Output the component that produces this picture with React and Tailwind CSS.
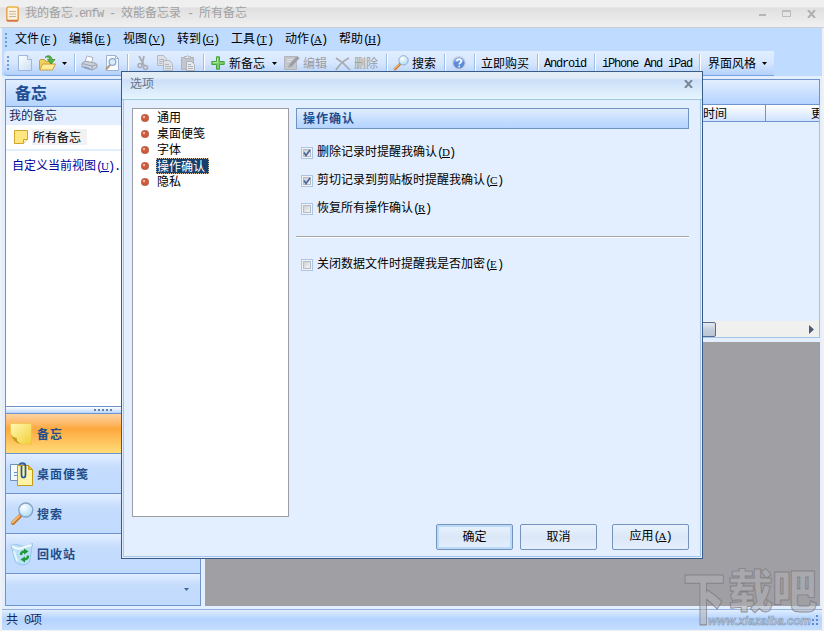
import { useState } from "react";

const menus = [
  { nome: "文件", tecla: "F" },
  { nome: "编辑", tecla: "E" },
  { nome: "视图", tecla: "V" },
  { nome: "转到", tecla: "G" },
  { nome: "工具", tecla: "T" },
  { nome: "动作", tecla: "A" },
  { nome: "帮助", tecla: "H" },
];

const categories = ["通用", "桌面便笺", "字体", "操作确认", "隐私"];

const Mono = ({ children }) => (
  <span className="font-['Liberation_Mono',monospace] text-[12px] tracking-[-1.2px] whitespace-pre">{children}</span>
);

const Hotkey = ({ k }) => (
  <Mono>
    (<span className="font-['Liberation_Serif',serif] text-[11px] tracking-normal underline underline-offset-1 inline-block w-[6px] -indent-px">{k}</span>)
  </Mono>
);

const Sep = ({ className }) => (
  <div className={`h-[18px] w-[2px] shrink-0 border-l border-[#9abfe8] bg-white ${className}`} />
);

const Arrow = ({ className }) => (
  <svg viewBox="0 0 5 3" className={`h-[3px] w-[5px] shrink-0 ${className}`}>
    <path d="M0 0h5L2.5 3z" fill="currentColor" />
  </svg>
);

const Grip = () => (
  <div className="flex w-[2px] shrink-0 flex-col gap-[2px]">
    {[0, 1, 2, 3].map((i) => (
      <span key={i} className="h-[2px] w-[2px] bg-[#6f9bd4]" />
    ))}
  </div>
);

function NewIcon() {
  return (
    <svg viewBox="0 0 16 16" className="h-4 w-4 shrink-0">
      <defs>
        <linearGradient id="page" x1="0" y1="0" x2="1" y2="1">
          <stop offset="0" stopColor="#fff" />
          <stop offset="1" stopColor="#c9def6" />
        </linearGradient>
      </defs>
      <path d="M1.5 .5h9l4 4v11h-13z" fill="url(#page)" stroke="#9db8dc" />
      <path d="M10.5 .5v4h4" fill="#e4f0fd" stroke="#9db8dc" />
    </svg>
  );
}

function OpenIcon() {
  return (
    <svg viewBox="0 0 17 16" className="h-4 w-[17px] shrink-0">
      <path d="M.5 14.500v-9l1-1h4l1.500 2h6v8z" fill="#f3cf5c" stroke="#c9a136" />
      <path d="M.8 15 3.500 9h13l-3 6z" fill="#ffeb9a" stroke="#c9a136" />
      <path d="M6 2.500C9-1 13 1 13 4.500h3L12 9 8.500 4.500H11C10.500 2 8 1.500 6 2.500z" fill="#57b443" stroke="#2f8a2c" strokeWidth=".7" />
    </svg>
  );
}

function PrintIcon() {
  return (
    <svg viewBox="0 0 17 16" className="h-4 w-[17px] shrink-0">
      <path d="M4 7 6 1l6 1.500L10.500 8z" fill="#fff" stroke="#a9b5c4" />
      <path d="M1 8.500 4 6l10 2 2 1.500v3L11 15 1 12z" fill="#ccd2da" stroke="#98a3b2" />
      <path d="m1 8.500 10 2.500 5-1.500M11 11v4" fill="none" stroke="#98a3b2" />
      <path d="m3 12 6 2" stroke="#7ba0d2" strokeWidth="1.500" />
    </svg>
  );
}

function PreviewIcon() {
  return (
    <svg viewBox="0 0 16 16" className="h-4 w-4 shrink-0">
      <path d="M2.500 .5h9l3 3v12h-12z" fill="#f7fbff" stroke="#9cb3d3" />
      <path d="M11.500 .5v3h3" fill="none" stroke="#9cb3d3" />
      <circle cx="8.500" cy="7" r="3.300" fill="#d8ebfb" stroke="#8eabd2" strokeWidth="1.300" />
      <path d="m6 10-4 4.500" stroke="#b99a7c" strokeWidth="2" />
    </svg>
  );
}

function CutIcon() {
  return (
    <svg viewBox="0 0 14 16" className="h-4 w-[14px] shrink-0" fill="none" stroke="#a9abb1">
      <path d="m3 1 5 9M8 1 6 10" strokeWidth="1.700" />
      <circle cx="4" cy="10.500" r="2" strokeWidth="1.500" />
      <circle cx="9.500" cy="12.500" r="2" strokeWidth="1.500" />
    </svg>
  );
}

function CopyIcon() {
  return (
    <svg viewBox="0 0 16 16" className="h-4 w-4 shrink-0" fill="#dde1e6" stroke="#b4b8c0">
      <path d="M.5 .5h6l3 3v7h-9z" />
      <path d="M2 4.500h5M2 6.500h5M2 8.500h3" />
      <path d="M6.500 5.500h6l3 3v7h-9z" />
      <path d="M8 9.500h4M8 11.500h6M8 13.500h6" />
    </svg>
  );
}

function PasteIcon() {
  return (
    <svg viewBox="0 0 16 16" className="h-4 w-4 shrink-0" fill="#c3c6cc" stroke="#b0b3ba">
      <path d="M1.500 2.500h12v12h-12z" />
      <path d="M4.500 3.500v-2h2l1-1 1 1h2v2z" fill="#dde0e4" />
      <path d="M6.500 6.500h5l3 3v6h-8z" fill="#e8eaed" />
      <path d="M8 9.500h3M8 11.500h5M8 13.500h5" />
    </svg>
  );
}

function PlusIcon() {
  return (
    <svg viewBox="0 0 14 14" className="h-[14px] w-[14px] shrink-0">
      <path d="M5.500 .8h3V5.500h4.700v3H8.500v4.700h-3V8.500H.8v-3h4.700z" fill="#7acb66" stroke="#44a23c" strokeLinejoin="round" />
      <path d="M6.500 2v4.500H2" fill="none" stroke="#b4e8a4" />
    </svg>
  );
}

function EditIcon() {
  return (
    <svg viewBox="0 0 16 16" className="h-4 w-4 shrink-0">
      <path d="M.5 1.500h12v13H.5z" fill="#c3c6cb" stroke="#b3b6bc" />
      <path d="M3 4.500h6M3 6.500h4" stroke="#dfe1e4" />
      <path d="m4 13 1.500-4L13 1l2.500 2L8 11.500z" fill="#9a9da3" stroke="#b9bbc0" strokeWidth=".7" />
    </svg>
  );
}

function Magnifier({ className }) {
  return (
    <svg viewBox="0 0 24 24" className={`shrink-0 ${className}`}>
      <defs>
        <radialGradient id="lens" cx=".35" cy=".3" r=".8">
          <stop offset="0" stopColor="#fff" />
          <stop offset="1" stopColor="#a5d8f5" />
        </radialGradient>
      </defs>
      <path d="m10 14-7 7" stroke="#c37a35" strokeWidth="4" strokeLinecap="round" />
      <path d="m9 14-6.500 6.500" stroke="#f7b86c" strokeWidth="1.900" strokeLinecap="round" />
      <circle cx="15.800" cy="8" r="7" fill="url(#lens)" stroke="#86a3c8" strokeWidth="1.300" />
    </svg>
  );
}

function HelpIcon() {
  return (
    <svg viewBox="0 0 14 14" className="h-[14px] w-[14px] shrink-0">
      <circle cx="7" cy="7" r="6.300" fill="#5c8cd6" stroke="#c9d3e2" strokeWidth="1.400" />
      <path d="M2 5.500a5.200 5.200 0 0 1 10 0z" fill="#8db3e8" />
      <path d="M4.800 5.300c0-2.900 4.600-2.600 4.600 0C9.400 6.900 7.200 6.800 7.200 8.500" fill="none" stroke="#fff" strokeWidth="1.600" />
      <path d="M6.400 9.700H8v1.500H6.400z" fill="#fff" />
    </svg>
  );
}

function NoteIcon({ className }) {
  return (
    <svg viewBox="0 0 22 22" className={`shrink-0 ${className}`}>
      <defs>
        <linearGradient id="note" x1="0" y1="0" x2="1" y2="1">
          <stop offset="0" stopColor="#fff8b0" />
          <stop offset="1" stopColor="#f3cf3c" />
        </linearGradient>
      </defs>
      <path d="M.5 .5h21v20.500H11Q3 19 .5 11z" fill="url(#note)" stroke="#e6c341" strokeWidth=".6" />
      <path d="M.5 10Q2 14.500 7 15q-1.500 3 4 6Q3 20 .5 10z" fill="#c79b1b" />
    </svg>
  );
}

function MemoIcon() {
  return (
    <svg viewBox="0 0 24 24" className="h-6 w-6 shrink-0">
      <path d="M.5 2.500h15v16H.5z" fill="#f6faff" stroke="#6f90bd" />
      <path d="M4 10.500h4M4 13.500h4" stroke="#5f95d8" />
      <path d="M7.500 3.500h11l4 4v16h-15z" fill="#fff3a5" stroke="#c59a14" />
      <path d="M18.500 3.500v4h4z" fill="#eac33a" stroke="#c59a14" />
      <path d="M9.500 2.500Q10 1 12.500 1T15.500 3.500V13q0 2.500-2 2.500t-2-2.500V4" fill="none" stroke="#24599e" strokeWidth="1.700" />
    </svg>
  );
}

function RecycleIcon() {
  return (
    <svg viewBox="0 0 24 24" className="h-6 w-6 shrink-0">
      <path d="M1 3.500Q6 1 10 3.500T22.500 1.500L19.500 20q-7 6-14 0z" fill="#b9e0f6" stroke="#82bbe4" strokeWidth=".7" />
      <path d="M2 4q5 4 10 2t9.500-3" fill="none" stroke="#f3fbff" strokeWidth="2" />
      <path d="M4 9q2 9 4 10" stroke="#e6f6ff" strokeWidth="2" fill="none" />
      <path d="M11 13q0-3.500 4-3.500" fill="none" stroke="#21983a" strokeWidth="2.300" />
      <path d="m14 6.500 4.500 3-4.500 3z" fill="#21983a" />
      <path d="M18 13.500q0 4-4 4" fill="none" stroke="#21983a" strokeWidth="2.300" />
      <path d="m15 14.500-4.500 3 4.500 3z" fill="#21983a" />
    </svg>
  );
}

function TitleBar() {
  return (
    <header className="flex h-7 shrink-0 items-center border-b border-[#cbcdd0] bg-linear-to-b from-[#efefef] from-25% via-[#e0e0e0] via-30% to-[#f0f0f0] pl-[6px] text-[#a0a0a0]">
      <svg viewBox="0 0 13 16" className="mt-px h-4 w-[13px]">
        <rect x=".8" y="1" width="11.400" height="14.200" rx="2" fill="#fff3dc" stroke="#e3a15c" strokeWidth="1.500" />
        <path d="M2 1h9" stroke="#efc36a" strokeWidth="2" />
        <path d="M3 5.500h7M3 8h7M3 10.500h7" stroke="#c4b7a8" />
        <path d="M1 14.500h11" stroke="#d7714a" strokeWidth="1.500" />
      </svg>
      <h1 className="mt-[-2px] ml-[6px]">
        我的备忘<Mono>.enfw - </Mono>效能备忘录<Mono> - </Mono>所有备忘
      </h1>
      <div className="mr-[8px] ml-auto flex items-center gap-[16px] text-[#b0b0b0]">
        <span className="mt-[2px] h-[2px] w-[7px] bg-[#b5b5b5]" />
        <span className="h-[7px] w-[9px] border border-t-2 border-[#bdbdbd]" />
        <svg viewBox="0 0 9 8" className="h-2 w-[9px]">
          <path d="m1 0 7 8M8 0 1 8" stroke="currentColor" strokeWidth="2" />
        </svg>
      </div>
    </header>
  );
}

function Toolbar() {
  return (
    <div className="flex h-[25px] w-[770px] shrink-0 items-center rounded-l-sm border-b border-[#79a5df] bg-linear-to-b from-[#e1eeff] via-[#d6e6fe] to-[#b4d1fc] pl-[3px] whitespace-nowrap">
      <Grip />
      <div className="ml-[8px] flex"><NewIcon /></div>
      <div className="ml-[6px] flex"><OpenIcon /></div>
      <Arrow className="ml-[6px]" />
      <Sep className="ml-[7px]" />
      <div className="ml-[5px] flex"><PrintIcon /></div>
      <div className="ml-[6px] flex"><PreviewIcon /></div>
      <Sep className="ml-[7px]" />
      <div className="ml-[7px] flex"><CutIcon /></div>
      <div className="ml-[7px] flex"><CopyIcon /></div>
      <div className="ml-[7px] flex"><PasteIcon /></div>
      <Sep className="ml-[7px]" />
      <div className="ml-[6px] flex"><PlusIcon /></div>
      <span className="ml-[4px] w-9">新备忘</span>
      <Arrow className="ml-[7px]" />
      <div className="ml-[7px] flex"><EditIcon /></div>
      <span className="ml-[3px] w-6 text-[#9b9ca0]">编辑</span>
      <svg viewBox="0 0 16 14" className="mt-[2px] ml-[8px] h-[14px] w-4">
        <path d="M1 1q8 5 14 12M14 1Q6 5 1 13" stroke="#a9acb2" strokeWidth="1.800" fill="none" />
      </svg>
      <span className="ml-[3px] w-6 text-[#9b9ca0]">删除</span>
      <Sep className="ml-[8px]" />
      <Magnifier className="ml-[5px] h-4 w-4" />
      <span className="ml-[3px] w-6">搜索</span>
      <Sep className="ml-[8px]" />
      <div className="ml-[6px] flex"><HelpIcon /></div>
      <Sep className="ml-[8px]" />
      <span className="ml-[5px] w-12">立即购买</span>
      <Sep className="ml-[8px]" />
      <span className="ml-[5px] w-[43px]"><Mono>Android</Mono></span>
      <Sep className="ml-[7px]" />
      <span className="ml-[6px] w-[90px]"><Mono>iPhone And iPad</Mono></span>
      <Sep className="ml-[7px]" />
      <span className="ml-[7px] w-12">界面风格</span>
      <Arrow className="ml-[6px]" />
    </div>
  );
}

const navRow = "flex h-10 items-center border-b border-[#6f93cb] pl-[4px] text-[12px] font-bold tracking-[1px] text-[#204d89]";
const blueRow = "bg-linear-to-b from-[#e2efff] from-0% via-[#c5dcfc] via-36% to-[#c0dbff]";

function Sidebar() {
  return (
    <aside className="flex h-[527px] w-[196px] shrink-0 flex-col border border-[#6f93cb] bg-white">
      <h2 className="flex h-[27px] shrink-0 items-center border-b border-[#6f93cb] bg-linear-to-b from-[#e3efff] to-[#b3d3ff] pb-[3px] pl-[9px] text-[16px] font-bold text-[#204d91]">
        备忘
      </h2>
      <div className="flex h-[18px] shrink-0 items-center bg-[#e3efff] pb-[2px] pl-[3px] text-[#15285a]">我的备忘</div>
      <div className="flex h-[26px] shrink-0 items-center border-b-2 border-[#e3efff] pl-[8px]">
        <svg viewBox="0 0 14 14" className="h-[14px] w-[14px]">
          <path d="M.5 .5h13v9l-4 4h-9z" fill="#ffe680" stroke="#d2a52b" />
          <path d="M9.500 13.500v-4h4" fill="#fff5bc" stroke="#d2a52b" />
        </svg>
        <span className="ml-[4px] h-4 w-[55px] bg-[#f2f2f2] pl-px leading-[15px]">所有备忘</span>
      </div>
      <a className="mt-[6px] ml-[6px] leading-4 text-[#0000a0]">
        自定义当前视图<Hotkey k="U" />
        <Mono>.</Mono>
      </a>
      <div className="mt-auto flex h-[8px] shrink-0 items-center justify-center gap-[2px] border-y border-[#6f93cb] bg-linear-to-b from-white to-[#b9d5fb]">
        {[0, 1, 2, 3, 4].map((i) => (
          <span key={i} className="h-[2px] w-[2px] bg-[#6681a8]" />
        ))}
      </div>
      <nav className="shrink-0">
        <div className={`${navRow} bg-linear-to-b from-[#fdd3a0] from-0% via-[#fda83c] via-38% to-[#fedc78]`}>
          <NoteIcon className="h-[22px] w-[22px]" />
          <span className="ml-[5px]">备忘</span>
        </div>
        <div className={`${navRow} ${blueRow}`}>
          <MemoIcon />
          <span className="ml-[3px]">桌面便笺</span>
        </div>
        <div className={`${navRow} ${blueRow}`}>
          <Magnifier className="h-6 w-6" />
          <span className="ml-[3px]">搜索</span>
        </div>
        <div className={`${navRow} ${blueRow}`}>
          <RecycleIcon />
          <span className="ml-[3px]">回收站</span>
        </div>
        <div className={`flex h-[31px] items-center justify-end pr-[11px] text-[#39689f] ${blueRow}`}>
          <Arrow />
        </div>
      </nav>
    </aside>
  );
}

function MainPane() {
  return (
    <main className="ml-1 flex h-[527px] w-[615px] shrink-0 flex-col">
      <section className="flex h-[259px] shrink-0 flex-col border border-[#a4c2e6] bg-[#e3efff]">
        <div className="-mx-px -mt-px h-[26px] shrink-0 border border-[#6f93cb] bg-linear-to-b from-[#e3efff] to-[#b3d3ff]" />
        <div className="flex h-[17px] shrink-0 overflow-hidden border-b border-[#6f93cb] bg-linear-to-b from-white to-[#cfe2fe] leading-4 whitespace-nowrap">
          <div className="w-[560px] shrink-0 border-r border-[#6f93cb] pr-[38px] text-right">创建时间</div>
          <div className="w-[120px] shrink-0 pl-[45px]">更新时间</div>
        </div>
        <div className="mt-auto flex h-4 shrink-0 items-center bg-[#f0f0ef] pr-[5px]">
          <div className="h-[15px] w-[510px] rounded-xs border border-[#536b91] bg-linear-to-b from-[#e4eaf1] via-[#c5cfdb] to-[#b9c5d2]" />
          <svg viewBox="0 0 5 9" className="ml-auto h-[9px] w-[5px]">
            <path d="M0 0v9l5-4.500z" fill="#4b5a78" />
          </svg>
        </div>
      </section>
      <div className="mt-1 flex-1 bg-[#a09fa4]" />
    </main>
  );
}

function CheckRow({ label, hotkey, defaultChecked }) {
  const [checked, setChecked] = useState(defaultChecked);

  return (
    <label className="flex h-7 items-center pl-[5px]">
      <input type="checkbox" className="sr-only" checked={checked} onChange={() => setChecked(!checked)} />
      <span className="mt-[2px] flex h-3 w-3 items-center justify-center border border-[#a9c5e8] bg-[#f4f4f4]">
        <span className="flex h-2 w-2 border border-[#b5bbc4] bg-linear-to-br from-[#cbcfd5] to-[#f6f6f6]">
          {checked && (
            <svg viewBox="0 0 8 8" className="-m-px h-2 w-2 shrink-0">
              <path d="M1 3.500 3 6.500 7 1" fill="none" stroke="#4a6b9d" strokeWidth="1.800" />
            </svg>
          )}
        </span>
      </span>
      <span className="ml-[4px]">
        {label}
        <Hotkey k={hotkey} />
      </span>
    </label>
  );
}

const button = "h-[26px] w-[77px] rounded-xs border border-[#7593bd] bg-linear-to-b from-[#e9f2fe] from-0% via-[#dbe7f7] via-50% to-[#e4effe] pb-[2px]";

function OptionsDialog() {
  const [selected, setSelected] = useState("操作确认");

  return (
    <div className="absolute top-[71px] left-[121px] flex h-[488px] w-[582px] flex-col border border-[#3b5b87] bg-[#e3efff]">
      <div className="flex h-[28px] shrink-0 items-center justify-between border-b border-[#9fc9e0] bg-linear-to-b from-[#e2ecf7] from-20% via-[#ccdff8] via-30% to-[#e6f5fe] pr-[9px] pl-[8px] text-[#6b7482]">
        <span className="mt-[-5px]">选项</span>
        <svg viewBox="0 0 9 8" className="mt-[-3px] h-2 w-[9px]">
          <path d="m1 0 7 8M8 0 1 8" stroke="#7b8797" strokeWidth="2" />
        </svg>
      </div>
      <div className="mx-px mb-px flex flex-1 flex-col border border-t-0 border-[#a6c5e6]">
        <div className="flex h-[417px] pt-2 pl-2">
          <ul className="flex h-[409px] w-[157px] shrink-0 flex-col border border-[#9b9fa5] bg-white pt-px">
            {categories.map((item) => (
              <li key={item} className="flex h-4 items-center pl-2" onClick={() => setSelected(item)}>
                <svg viewBox="0 0 8 8" className="h-2 w-2">
                  <circle cx="4" cy="4" r="3.800" fill="#cc5a3c" stroke="#a04a36" strokeWidth=".5" />
                  <circle cx="3" cy="3" r="1.300" fill="#f5ad93" />
                </svg>
                {item === selected ? (
                  <span className="-mt-px ml-[7px] h-4 w-[53px] border border-dotted border-[#d8bfa0] bg-[#17406d] leading-[14px] text-white">{item}</span>
                ) : (
                  <span className="-mt-[2px] ml-2 leading-4">{item}</span>
                )}
              </li>
            ))}
          </ul>
          <section className="ml-[7px] w-[393px]">
            <h3 className="flex h-[21px] items-center border border-[#6f93c3] bg-linear-to-b from-[#e0edff] to-[#b3d3ff] pb-[2px] pl-[6px] font-bold tracking-[1px] text-[#204d91]">
              操作确认
            </h3>
            <div className="mt-[9px]">
              <CheckRow label="删除记录时提醒我确认" hotkey="D" defaultChecked />
              <CheckRow label="剪切记录到剪贴板时提醒我确认" hotkey="C" defaultChecked />
              <CheckRow label="恢复所有操作确认" hotkey="R" defaultChecked={false} />
            </div>
            <hr className="mt-[14px] mb-[12px] h-[2px] border-t border-b border-t-[#a3a5a6] border-b-white" />
            <CheckRow label="关闭数据文件时提醒我是否加密" hotkey="E" defaultChecked={false} />
          </section>
        </div>
        <footer className="mt-[7px] mr-[11px] flex justify-end">
          <button className={`${button} shadow-[inset_0_0_0_2px_#b9dbf8]`}>确定</button>
          <button className={`${button} ml-[7px]`}>取消</button>
          <button className={`${button} ml-[15px]`}>
            应用<Hotkey k="A" />
          </button>
        </footer>
      </div>
    </div>
  );
}

function Watermark() {
  return (
    <svg viewBox="0 0 142 66" className="pointer-events-none absolute right-0 bottom-0 h-[66px] w-[142px]">
      <g fontFamily="'Noto Sans CJK SC', sans-serif" fontWeight="900" fill="#b0b0b5" fillOpacity=".55" stroke="#77777d" strokeWidth=".9" strokeOpacity=".75">
        <text transform="translate(1 54) scale(.92 1.220)" fontSize="46">下</text>
        <text x="46" y="43" fontSize="45">载</text>
        <text x="90" y="43" fontSize="45">吧</text>
      </g>
      <text x="26" y="60" textLength="103" lengthAdjust="spacingAndGlyphs" fontFamily="'Liberation Sans', sans-serif" fontStyle="italic" fontWeight="700" fontSize="13" fill="#b9cbe0" stroke="#8497b0" strokeWidth=".6">
        www.xiazaiba.com
      </text>
    </svg>
  );
}

export default function App() {
  return (
    <div className="relative flex h-[631px] w-[824px] flex-col overflow-hidden bg-[#f0f1f2] font-['Noto_Sans_CJK_SC',sans-serif] text-[12px] leading-4 text-black">
      <TitleBar />
      <div className="mr-[2px] ml-[2px] flex h-[602px] shrink-0 flex-col bg-[#e3efff]">
        <div className="flex h-12 shrink-0 flex-col bg-[#bfdbff] pl-[2px]">
          <div className="flex h-[23px] shrink-0 items-center pl-px">
            <Grip />
            <ul className="mt-[-2px] ml-[8px] flex gap-3">
              {menus.map((m) => (
                <li key={m.nome} className="w-[42px] whitespace-nowrap">
                  {m.nome}
                  <Hotkey k={m.tecla} />
                </li>
              ))}
            </ul>
          </div>
          <Toolbar />
        </div>
        <div className="flex h-[533px] shrink-0 pt-[3px] pl-[3px]">
          <Sidebar />
          <MainPane />
        </div>
        <footer className="flex h-[21px] items-center justify-between border-t border-[#8fb2df] bg-linear-to-b from-[#e0edff] from-0% via-[#b4d3ff] via-45% to-[#c5deff] pr-[3px] pl-[4px] text-[#15285a]">
          <span>
            共<Mono> 0</Mono>项
          </span>
          <svg viewBox="0 0 11 11" className="h-[11px] w-[11px]" fill="#5f8ac4">
            <path d="M8 0h2v2H8zM8 4h2v2H8zM8 8h2v2H8zM4 4h2v2H4zM4 8h2v2H4zM0 8h2v2H0z" />
          </svg>
        </footer>
      </div>
      <OptionsDialog />
      <Watermark />
    </div>
  );
}
